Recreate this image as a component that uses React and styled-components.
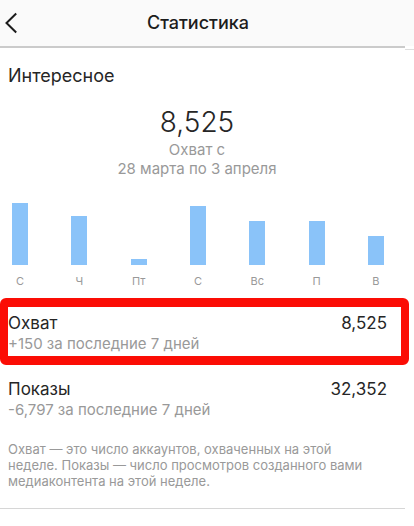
import React from 'react';
import styled, { createGlobalStyle } from 'styled-components';

const GlobalStyle = createGlobalStyle`
  * { box-sizing: border-box; }
  body { margin: 0; background: #fff; font-family: Inter, "Liberation Sans", sans-serif; color: #262626; }
  h1, h2, p, dl, dt, dd { margin: 0; font-weight: 400; }
`;

const Header = styled.header`
  display: grid;
  grid-template-columns: 28px 1fr 46px;
  align-items: center;
  height: 46px;
  background: #fafafa;
`;

const BackButton = styled.button`
  display: flex;
  padding: 0 0 0 4px;
  border: 0;
  background: none;
  color: #1c1c1c;
  cursor: pointer;
`;

const Title = styled.h1`
  && { font-weight: 500; }
  font-size: 18px;
  line-height: 24px;
  text-align: center;
  color: #1c1c1c;
`;

const HeaderRule = styled.div`
  display: flex;
  align-items: flex-start;
  height: 4px;
  &::before { content: ""; flex: 1; height: 2px; background: #cbcbcb; }
  &::after { content: ""; width: 9px; height: 1px; margin-top: 3px; background: #dedede; }
`;

const SectionTitle = styled.h2`
  padding: 14px 8px 0;
  font-size: 18px;
  line-height: 24px;
`;

const Summary = styled.section`
  padding: 16px 28px 0 8px;
  text-align: center;
`;

const Total = styled.p`
  font-size: 28px;
  line-height: 36px;
  && { font-weight: 300; }
`;

const Period = styled.p`
  font-size: 15px;
  line-height: 19px;
  color: #999;
`;

const Chart = styled.section`
  display: flex;
  justify-content: space-between;
  align-items: flex-end;
  padding: 25px 30px 0 12px;
`;

const Day = styled.div`
  display: flex;
  flex-direction: column;
  align-items: center;
  width: 16px;
`;

const Bar = styled.div`
  width: 16px;
  height: ${({ $value }) => $value}px;
  background: #8ac3f9;
`;

const DayLabel = styled.span`
  margin-top: 8px;
  font-size: 11px;
  line-height: 16px;
  color: #999;
`;

const Metrics = styled.dl`
  padding: 9px 5px 0 0;
`;

const Metric = styled.div`
  display: grid;
  grid-template-columns: 1fr auto;
  border: solid ${({ $highlighted }) => ($highlighted ? '#fb0d05' : 'transparent')};
  border-width: 9px 8px;
  border-radius: 6px;
  padding: 6px 14px 2px 0;
  & + & { border-top-width: 8px; }
`;

const MetricText = styled.dt`
  font-size: 17px;
  line-height: 20px;
`;

const Change = styled.dd`
  grid-column: 1 / -1;
  font-size: 15px;
  line-height: 21px;
  color: #999;
`;

const Note = styled.p`
  padding: 10px 32px 19px 8px;
  font-size: 13px;
  line-height: 16px;
  color: #999;
`;

const BottomRule = styled.div`
  height: 1px;
  margin-right: 9px;
  background: #d6d6d6;
`;

const days = [
  { name: 'С', value: 62 },
  { name: 'Ч', value: 49 },
  { name: 'Пт', value: 6 },
  { name: 'С', value: 59 },
  { name: 'Вс', value: 44 },
  { name: 'П', value: 44 },
  { name: 'В', value: 29 },
];

const metrics = [
  { name: 'Охват', value: '8,525', change: '+150 за последние 7 дней', highlighted: true },
  { name: 'Показы', value: '32,352', change: '-6,797 за последние 7 дней' },
];

export default function App() {
  return (
    <>
      <GlobalStyle />
      <Header>
        <BackButton type="button" aria-label="Назад">
          <svg width="16" height="22" viewBox="0 0 16 22" fill="none" stroke="currentColor" strokeWidth="2">
            <path d="M12.2 1.5 2.5 11l9.7 9.5" />
          </svg>
        </BackButton>
        <Title>Статистика</Title>
      </Header>
      <HeaderRule />
      <main>
        <SectionTitle>Интересное</SectionTitle>
        <Summary>
          <Total>8,525</Total>
          <Period>Охват с<br />28 марта по 3 апреля</Period>
        </Summary>
        <Chart aria-label="Охват по дням">
          {days.map((day, i) => (
            <Day key={i}>
              <Bar $value={day.value} />
              <DayLabel>{day.name}</DayLabel>
            </Day>
          ))}
        </Chart>
        <Metrics>
          {metrics.map((m) => (
            <Metric key={m.name} $highlighted={m.highlighted}>
              <MetricText>{m.name}</MetricText>
              <MetricText as="dd">{m.value}</MetricText>
              <Change>{m.change}</Change>
            </Metric>
          ))}
        </Metrics>
        <Note>
          Охват — это число аккаунтов, охваченных на этой неделе. Показы — число
          просмотров созданного вами медиаконтента на этой неделе.
        </Note>
        <BottomRule />
      </main>
    </>
  );
}
